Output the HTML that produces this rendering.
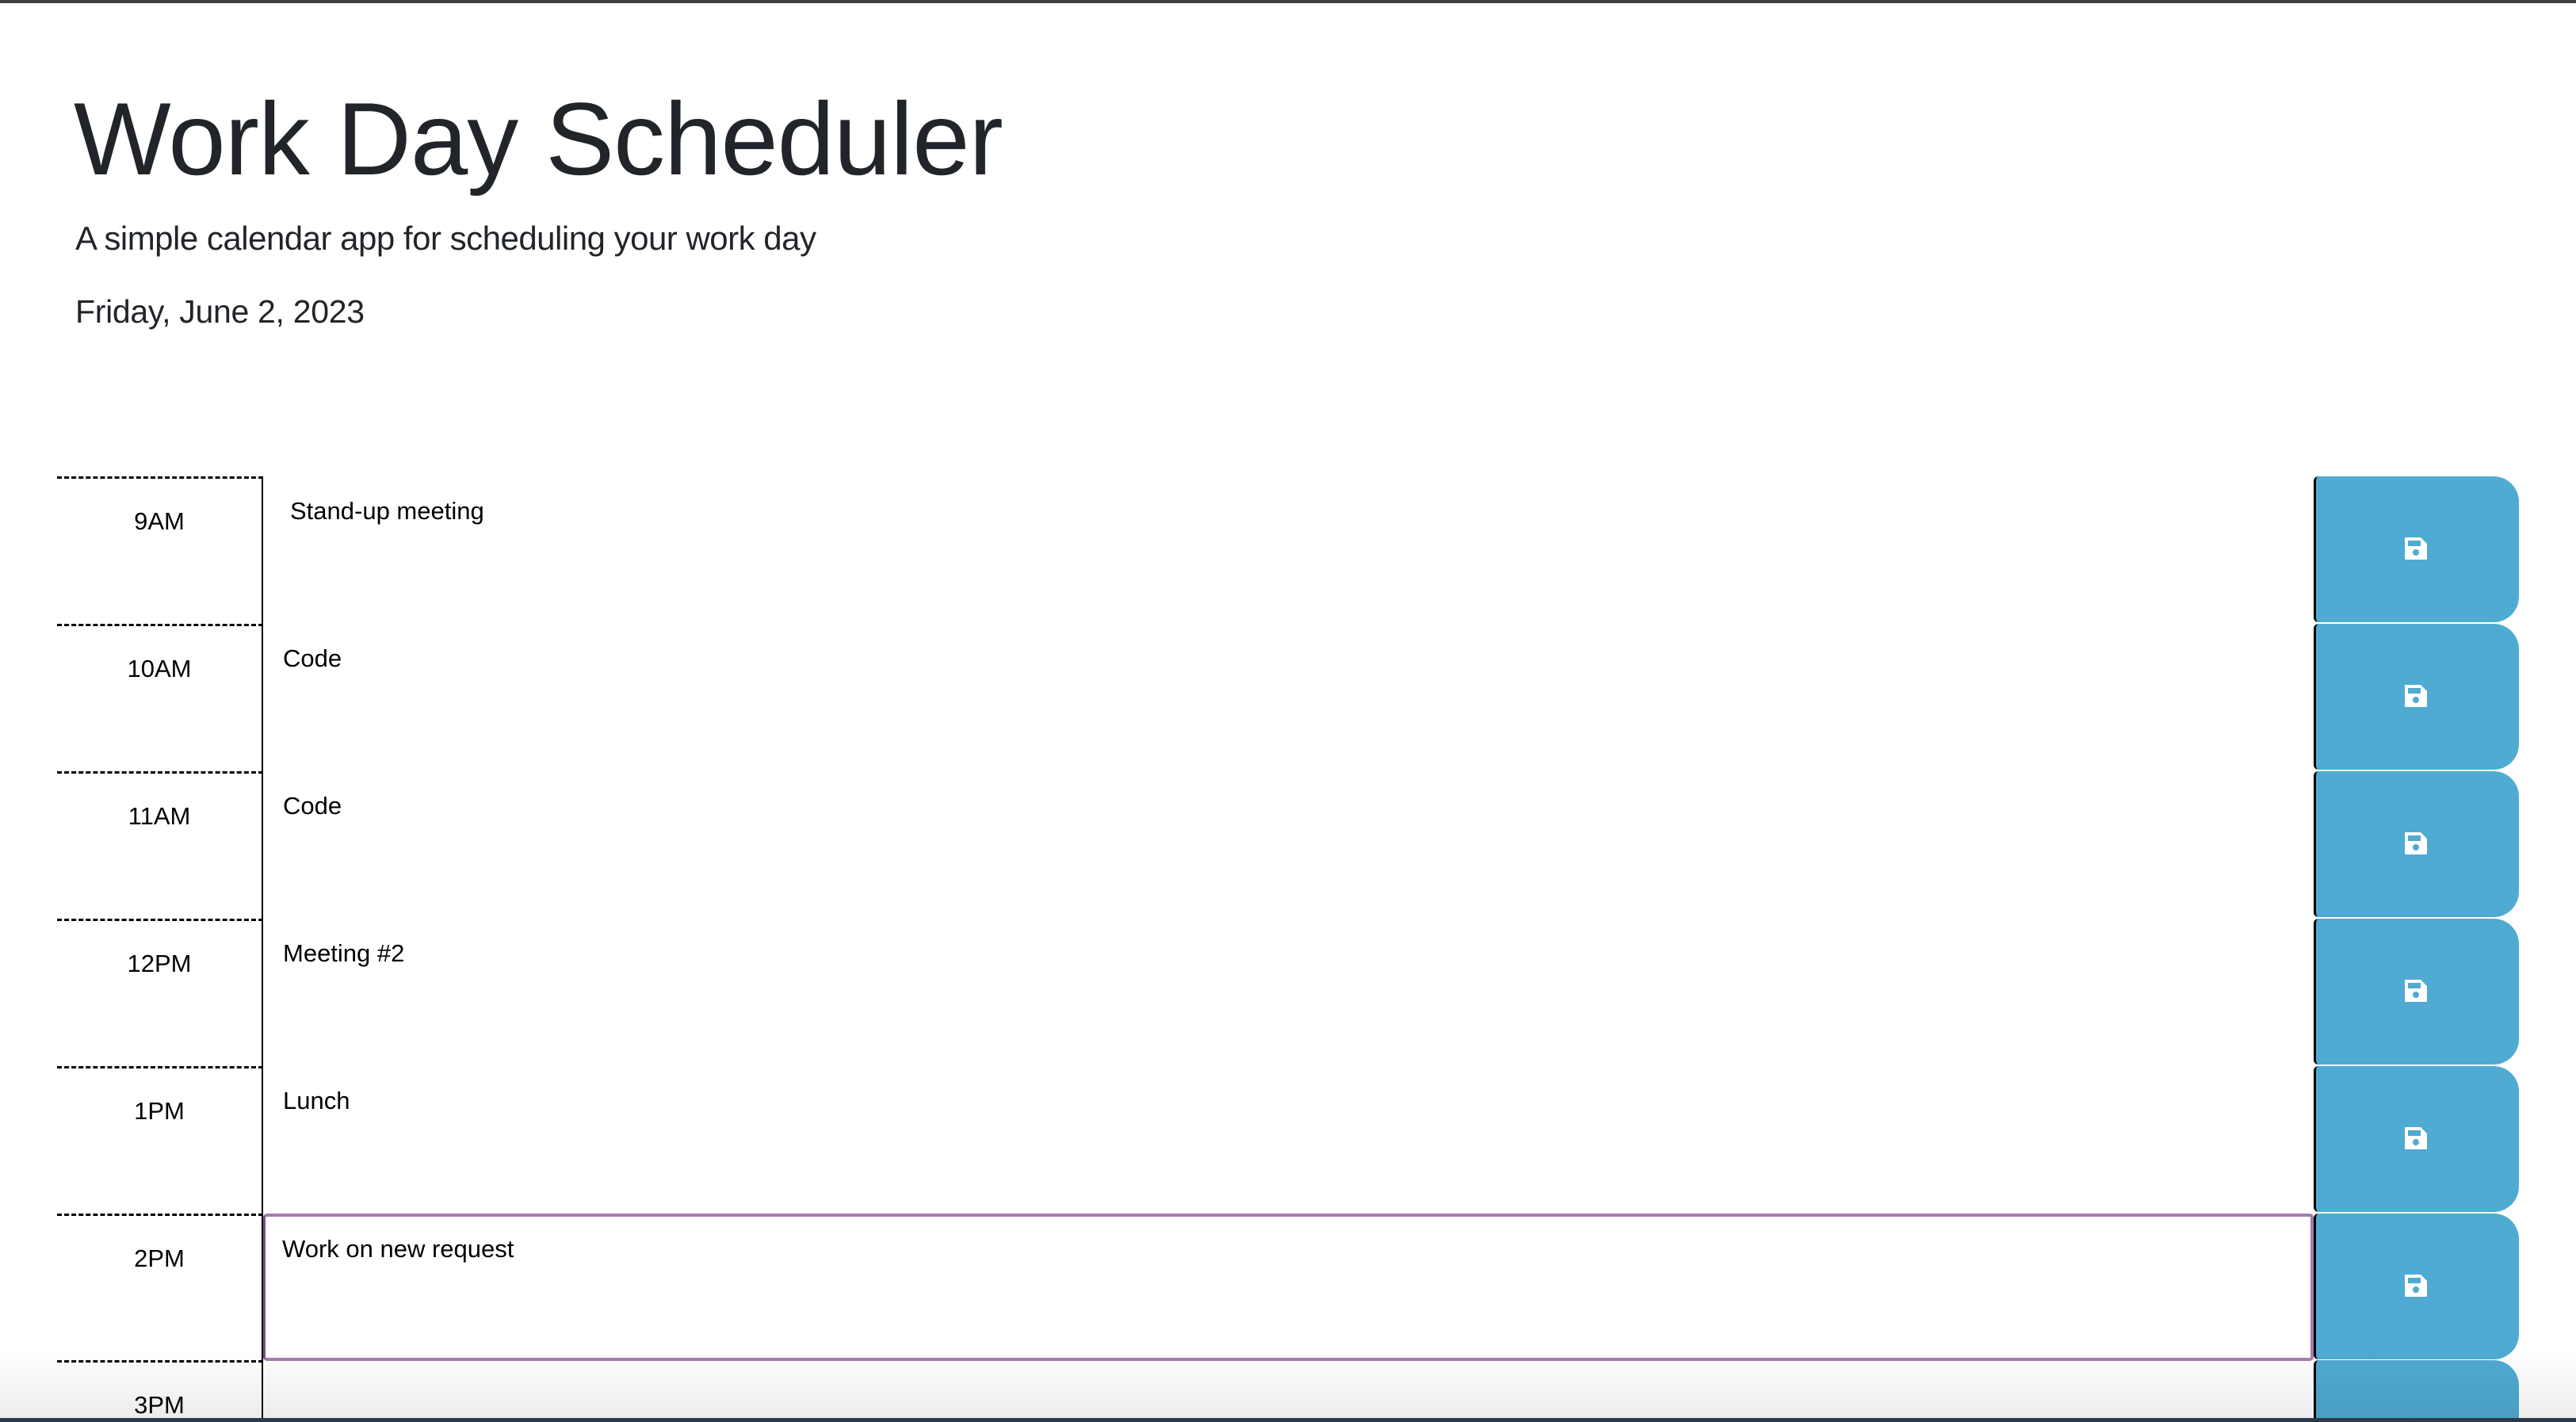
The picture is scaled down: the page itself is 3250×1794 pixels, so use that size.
<!DOCTYPE html>
<html><head><meta charset="utf-8"><style>
*{margin:0;padding:0;box-sizing:border-box}
html,body{width:3250px;height:1794px;overflow:hidden;background:#fff}
body{position:relative;font-family:"Liberation Sans",Arial,sans-serif;color:#000}
.topbar{position:absolute;left:0;top:0;width:3250px;height:4px;background:#3f4144}
h1{position:absolute;left:93px;top:110px;font-size:130px;font-weight:300;color:#212529;letter-spacing:-1px;line-height:1;white-space:nowrap}
.sub{position:absolute;left:95px;top:277px;font-size:42px;color:#212529;white-space:nowrap;letter-spacing:-0.5px}
.date{position:absolute;left:95px;top:370px;font-size:41px;color:#212529;white-space:nowrap;letter-spacing:-0.3px}
.row{position:absolute;left:72px;width:3106px;height:186px}
.hour{position:absolute;left:0;top:0;width:260px;height:186px;border-top:3px dashed #000;border-right:2px solid #000;text-align:center;font-size:31px;padding-top:36px}
.ta{position:absolute;left:260px;top:0;width:2587px;height:186px;font-size:31px;padding:26px 0 0 25px}
.ta.cur{border:4px solid #a77bb0;border-left:3px solid #7d4f87;border-radius:5px;padding:23px 0 0 21px}
.btn{position:absolute;left:2847px;top:0;width:259px;height:184px;background:#4fabd2;border-left:3px solid #000;border-radius:6px 32px 32px 6px}
.btn svg{position:absolute;left:112px;top:77px}
.last,.last .hour,.last .ta,.last .btn{height:73px}
.fade{position:absolute;left:0;top:1700px;width:3250px;height:94px;background:linear-gradient(rgba(0,0,0,0),rgba(0,0,0,0.08));pointer-events:none}
.bot{position:absolute;left:0;top:1789px;width:3250px;height:5px;background:#2b3a4a}
</style></head><body>
<div class="topbar"></div>
<h1>Work Day Scheduler</h1>
<div class="sub">A simple calendar app for scheduling your work day</div>
<div class="date">Friday, June 2, 2023</div>

<div class="row" style="top:601px"><div class="hour">9AM</div><div class="ta" style="padding-left:34px">Stand-up meeting</div><div class="btn"><svg width="28" height="28" viewBox="0 0 28 28"><path d="M1 0H20L28 8V27A1 1 0 0 1 27 28H1A1 1 0 0 1 0 27V1A1 1 0 0 1 1 0ZM4 4V11H20V4Z" fill="#fff" fill-rule="evenodd"/><circle cx="14" cy="19" r="4" fill="#4fabd2"/></svg></div></div>
<div class="row" style="top:787px"><div class="hour">10AM</div><div class="ta">Code</div><div class="btn"><svg width="28" height="28" viewBox="0 0 28 28"><path d="M1 0H20L28 8V27A1 1 0 0 1 27 28H1A1 1 0 0 1 0 27V1A1 1 0 0 1 1 0ZM4 4V11H20V4Z" fill="#fff" fill-rule="evenodd"/><circle cx="14" cy="19" r="4" fill="#4fabd2"/></svg></div></div>
<div class="row" style="top:973px"><div class="hour">11AM</div><div class="ta">Code</div><div class="btn"><svg width="28" height="28" viewBox="0 0 28 28"><path d="M1 0H20L28 8V27A1 1 0 0 1 27 28H1A1 1 0 0 1 0 27V1A1 1 0 0 1 1 0ZM4 4V11H20V4Z" fill="#fff" fill-rule="evenodd"/><circle cx="14" cy="19" r="4" fill="#4fabd2"/></svg></div></div>
<div class="row" style="top:1159px"><div class="hour">12PM</div><div class="ta">Meeting #2</div><div class="btn"><svg width="28" height="28" viewBox="0 0 28 28"><path d="M1 0H20L28 8V27A1 1 0 0 1 27 28H1A1 1 0 0 1 0 27V1A1 1 0 0 1 1 0ZM4 4V11H20V4Z" fill="#fff" fill-rule="evenodd"/><circle cx="14" cy="19" r="4" fill="#4fabd2"/></svg></div></div>
<div class="row" style="top:1345px"><div class="hour">1PM</div><div class="ta">Lunch</div><div class="btn"><svg width="28" height="28" viewBox="0 0 28 28"><path d="M1 0H20L28 8V27A1 1 0 0 1 27 28H1A1 1 0 0 1 0 27V1A1 1 0 0 1 1 0ZM4 4V11H20V4Z" fill="#fff" fill-rule="evenodd"/><circle cx="14" cy="19" r="4" fill="#4fabd2"/></svg></div></div>
<div class="row" style="top:1531px"><div class="hour">2PM</div><div class="ta cur">Work on new request</div><div class="btn"><svg width="28" height="28" viewBox="0 0 28 28"><path d="M1 0H20L28 8V27A1 1 0 0 1 27 28H1A1 1 0 0 1 0 27V1A1 1 0 0 1 1 0ZM4 4V11H20V4Z" fill="#fff" fill-rule="evenodd"/><circle cx="14" cy="19" r="4" fill="#4fabd2"/></svg></div></div>
<div class="row last" style="top:1716px;overflow:hidden"><div class="hour">3PM</div><div class="ta"></div><div class="btn" style="border-radius:6px 32px 0 0"></div></div>
<div class="fade"></div>
<div class="bot"></div>
</body></html>
